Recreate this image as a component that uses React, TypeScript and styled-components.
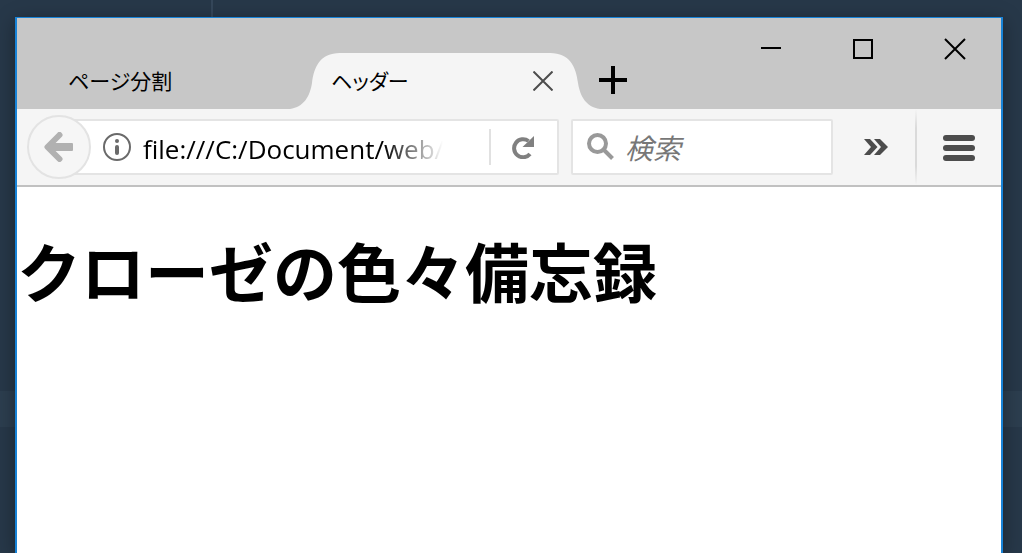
import React from "react";
import styled, { createGlobalStyle } from "styled-components";

const uiFont = `"Open Sans", "Noto Sans CJK JP", sans-serif`;

const GlobalStyle = createGlobalStyle`
  *, *::before, *::after { box-sizing: border-box; }
  body { margin: 0; background: #273849; }
`;

const Desktop = styled.div`
  display: flex;
  min-height: 100vh;
  padding: 17px 19px 0 15px;
  overflow: hidden;
  font-family: ${uiFont};
  background:
    linear-gradient(#35475a, #35475a) 211px 0 / 2px 17px no-repeat,
    linear-gradient(#2c3e4f, #2c3e4f) 0 391px / 100% 36px no-repeat,
    #273849;
`;

const BrowserWindow = styled.div`
  flex: 1;
  min-width: 0;
  display: flex;
  flex-direction: column;
  background: #fff;
  border: 2px solid #1883d7;
  border-top-width: 1px;
  border-bottom: 0;
  box-shadow: 0 4px 18px rgba(0, 0, 0, 0.35);
`;

const TitleBar = styled.header`
  display: flex;
  justify-content: space-between;
  height: 91px;
  background: #c7c7c7;
`;

const TabStrip = styled.div`
  display: flex;
  align-self: flex-end;
  height: 56px;
`;

const Tab = styled.div<{ $active?: boolean }>`
  position: relative;
  display: flex;
  align-items: center;
  width: ${(p) => (p.$active ? 310 : 273)}px;
  padding: 0 42px 0 ${(p) => (p.$active ? 41 : 51)}px;
`;

const TabShape = styled.svg`
  position: absolute;
  inset: 0;
`;

const PlainButton = styled.button`
  display: flex;
  align-items: center;
  justify-content: center;
  flex: none;
  padding: 0;
  border: 0;
  background: none;
  color: #000;
  font-family: inherit;

  svg { flex: none; }
`;

const TabLabel = styled(PlainButton)`
  position: relative;
  flex: 1;
  justify-content: flex-start;
  height: 54px;
  font-size: 21px;
  line-height: 32px;
  font-feature-settings: "palt";
`;

const TabClose = styled(PlainButton)`
  position: relative;
  width: 30px;
  height: 30px;
`;

const NewTab = styled(PlainButton)`
  width: 26px;
  height: 54px;
`;

const WindowControls = styled.div`
  display: flex;
  height: 62px;
`;

const WindowButton = styled(PlainButton)`
  width: 92px;
`;

const Toolbar = styled.nav`
  display: flex;
  align-items: center;
  height: 78px;
  padding-left: 10px;
  background: #f5f5f5;
  border-bottom: 2px solid #c1c1c1;
`;

const BackButton = styled(PlainButton)`
  z-index: 1;
  width: 64px;
  height: 64px;
  border: 2px solid #e3e3e3;
  border-radius: 50%;
  background: #f6f6f6;
`;

const Field = styled.div`
  display: flex;
  align-items: center;
  height: 56px;
  background: #fff;
  border: 2px solid #e4e4e4;
  border-radius: 2px;
`;

const AddressField = styled(Field)`
  flex: 1;
  min-width: 0;
  margin-left: -32px;
  padding-left: 42px;
`;

const SearchField = styled(Field)`
  width: 262px;
  margin-left: 12px;
  padding-left: 14px;
`;

const TextInput = styled.input`
  flex: 1;
  min-width: 0;
  height: 44px;
  padding: 0;
  border: 0;
  outline: 0;
  background: none;
  color: #000;
  font-family: inherit;
  font-size: 26px;
`;

const AddressInput = styled(TextInput)`
  margin: 0 46px 0 12px;
  padding-top: 4px;
  mask-image: linear-gradient(to left, transparent, #000 60px);
`;

const SearchInput = styled(TextInput)`
  margin-left: 10px;
  padding-top: 2px;
  font-size: 28px;
  font-style: italic;
  &::placeholder { color: #777; opacity: 1; }
`;

const ReloadButton = styled(PlainButton)`
  width: 68px;
  height: 36px;
  border-left: 2px solid #e1e1e1;
`;

const OverflowButton = styled(PlainButton)`
  width: 82px;
  height: 76px;
  padding-left: 4px;
`;

const Divider = styled.div`
  width: 2px;
  height: 76px;
  background: linear-gradient(#f5f5f5, #dadada 25%, #dadada 75%, #f5f5f5);
`;

const MenuButton = styled(PlainButton)`
  width: 84px;
  height: 76px;
`;

const Page = styled.main`
  flex: 1;
  padding-top: 34px;
`;

const Title = styled.h1`
  margin: 0;
  color: #000;
  font-family: "Noto Sans CJK JP", sans-serif;
  font-size: 64px;
  font-weight: 700;
  line-height: 96px;
`;

export default function App() {
  return (
    <>
      <GlobalStyle />
      <Desktop>
        <BrowserWindow>
          <TitleBar>
            <TabStrip>
              <Tab>
                <TabLabel type="button">ページ分割</TabLabel>
              </Tab>
              <Tab $active>
                <TabShape width="310" height="56" viewBox="0 0 310 56" aria-hidden="true">
                  <path
                    d="M0 56C14 54 20 43 22 30C24 14 30 0 50 0H260C280 0 286 14 288 30C290 43 296 54 310 56Z"
                    fill="#f5f5f5"
                  />
                </TabShape>
                <TabLabel type="button">ヘッダー</TabLabel>
                <TabClose type="button" aria-label="タブを閉じる">
                  <svg width="20" height="20" viewBox="0 0 20 20" stroke="#4d4d4d" strokeWidth="2">
                    <path d="M0.5 0.5L19.5 19.5M19.5 0.5L0.5 19.5" />
                  </svg>
                </TabClose>
              </Tab>
              <NewTab type="button" aria-label="新しいタブ">
                <svg width="28" height="28" viewBox="0 0 28 28" fill="#000">
                  <path d="M12 0h4v12h12v4H16v12h-4V16H0v-4h12z" />
                </svg>
              </NewTab>
            </TabStrip>
            <WindowControls>
              <WindowButton type="button" aria-label="最小化">
                <svg width="20" height="20" viewBox="0 0 20 20">
                  <path d="M0 8h20v2H0z" />
                </svg>
              </WindowButton>
              <WindowButton type="button" aria-label="最大化">
                <svg width="20" height="20" viewBox="0 0 20 20" fill="none" stroke="#000" strokeWidth="2">
                  <path d="M1 1h18v18H1z" />
                </svg>
              </WindowButton>
              <WindowButton type="button" aria-label="閉じる">
                <svg width="22" height="22" viewBox="0 0 22 22" stroke="#000" strokeWidth="2">
                  <path d="M1 1L21 21M21 1L1 21" />
                </svg>
              </WindowButton>
            </WindowControls>
          </TitleBar>

          <Toolbar>
            <BackButton type="button" aria-label="戻る">
              <svg width="30" height="30" viewBox="0 0 30 30" fill="none" stroke="#b1b1b1">
                <path d="M15.500 3L3.500 15L15.500 27" strokeWidth="6" strokeLinecap="round" strokeLinejoin="round" />
                <path d="M5 15H27" strokeWidth="8" />
                <path d="M26 12H28V18H26Z" strokeWidth="2" strokeLinejoin="round" fill="#b1b1b1" />
              </svg>
            </BackButton>
            <AddressField>
              <PlainButton type="button" aria-label="サイト情報">
                <svg width="28" height="28" viewBox="0 0 28 28" fill="#6a6a6a">
                  <circle cx="14" cy="14" r="13" fill="none" stroke="#6a6a6a" strokeWidth="2" />
                  <circle cx="14" cy="8" r="2" />
                  <rect x="12" y="12" width="4" height="10" rx="2" />
                </svg>
              </PlainButton>
              <AddressInput aria-label="アドレス" defaultValue="file:///C:/Document/web/" />
              <ReloadButton type="button" aria-label="再読み込み">
                <svg width="24" height="24" viewBox="0 0 24 24">
                  <path d="M16.500 6A9 9 0 1 0 18 19" fill="none" stroke="#808080" strokeWidth="4" />
                  <path d="M22 1V12H10.500Z" fill="#808080" />
                </svg>
              </ReloadButton>
            </AddressField>
            <SearchField>
              <svg width="28" height="28" viewBox="0 0 28 28" fill="none" stroke="#999" aria-hidden="true">
                <circle cx="10.500" cy="10.500" r="8.500" strokeWidth="4" />
                <path d="M17 17L25.500 25.500" strokeWidth="4" />
              </svg>
              <SearchInput aria-label="検索" placeholder="検索" />
            </SearchField>
            <OverflowButton type="button" aria-label="その他のツール">
              <svg width="24" height="16" viewBox="0 0 24 16" fill="#4c4c4c">
                <path d="M0 0H6L13.500 8L6 16H0L7 8ZM10 0H16L24 8L16 16H10L17 8Z" />
              </svg>
            </OverflowButton>
            <Divider />
            <MenuButton type="button" aria-label="メニュー">
              <svg width="32" height="28" viewBox="0 0 32 28" fill="#4c4c4c">
                <rect y="2" width="32" height="6" rx="3" />
                <rect y="12" width="32" height="6" rx="3" />
                <rect y="22" width="32" height="6" rx="3" />
              </svg>
            </MenuButton>
          </Toolbar>

          <Page>
            <Title>クローゼの色々備忘録</Title>
          </Page>
        </BrowserWindow>
      </Desktop>
    </>
  );
}
